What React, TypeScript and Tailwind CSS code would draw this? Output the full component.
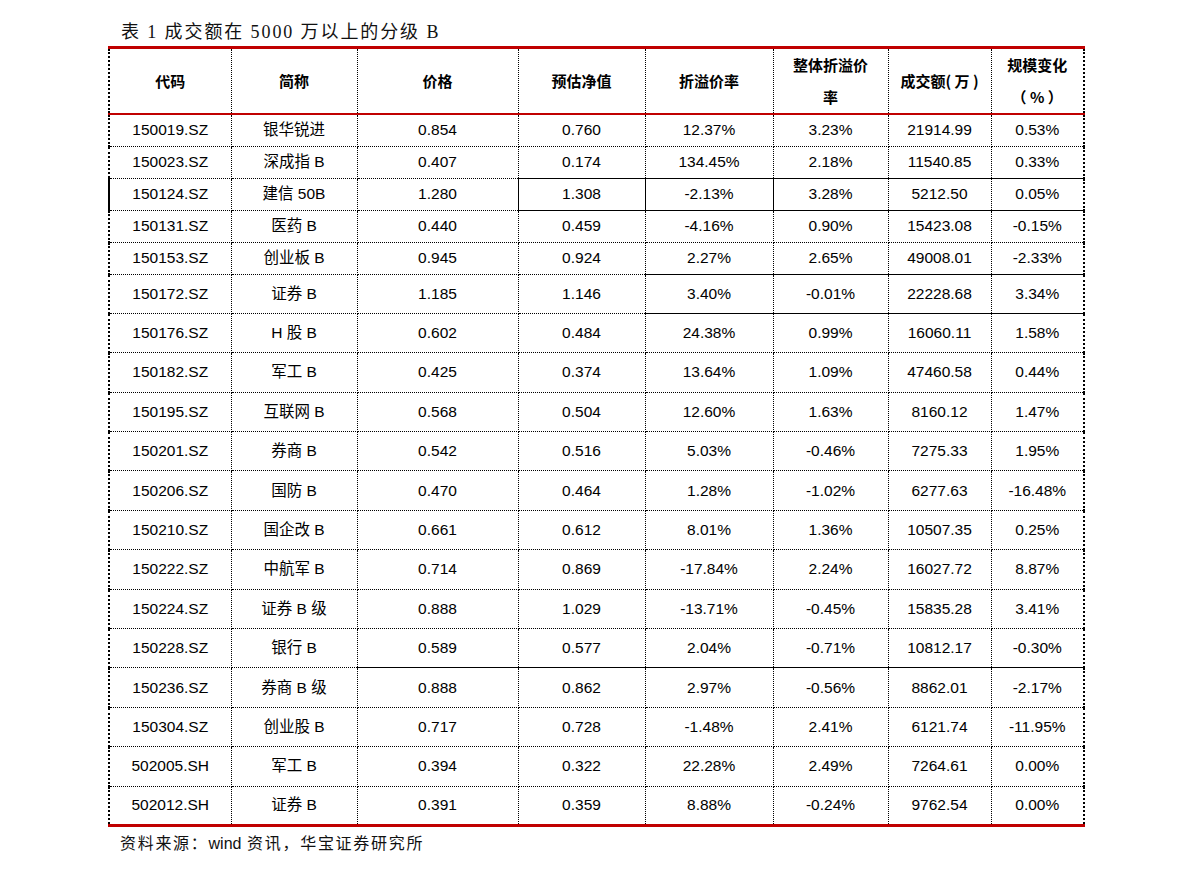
import React from "react";

type Row = [string, string, string, string, string, string, string, string];

const rows: Row[] = [
  ["150019.SZ", "银华锐进", "0.854", "0.760", "12.37%", "3.23%", "21914.99", "0.53%"],
  ["150023.SZ", "深成指 B", "0.407", "0.174", "134.45%", "2.18%", "11540.85", "0.33%"],
  ["150124.SZ", "建信 50B", "1.280", "1.308", "-2.13%", "3.28%", "5212.50", "0.05%"],
  ["150131.SZ", "医药 B", "0.440", "0.459", "-4.16%", "0.90%", "15423.08", "-0.15%"],
  ["150153.SZ", "创业板 B", "0.945", "0.924", "2.27%", "2.65%", "49008.01", "-2.33%"],
  ["150172.SZ", "证券 B", "1.185", "1.146", "3.40%", "-0.01%", "22228.68", "3.34%"],
  ["150176.SZ", "H 股 B", "0.602", "0.484", "24.38%", "0.99%", "16060.11", "1.58%"],
  ["150182.SZ", "军工 B", "0.425", "0.374", "13.64%", "1.09%", "47460.58", "0.44%"],
  ["150195.SZ", "互联网 B", "0.568", "0.504", "12.60%", "1.63%", "8160.12", "1.47%"],
  ["150201.SZ", "券商 B", "0.542", "0.516", "5.03%", "-0.46%", "7275.33", "1.95%"],
  ["150206.SZ", "国防 B", "0.470", "0.464", "1.28%", "-1.02%", "6277.63", "-16.48%"],
  ["150210.SZ", "国企改 B", "0.661", "0.612", "8.01%", "1.36%", "10507.35", "0.25%"],
  ["150222.SZ", "中航军 B", "0.714", "0.869", "-17.84%", "2.24%", "16027.72", "8.87%"],
  ["150224.SZ", "证券 B 级", "0.888", "1.029", "-13.71%", "-0.45%", "15835.28", "3.41%"],
  ["150228.SZ", "银行 B", "0.589", "0.577", "2.04%", "-0.71%", "10812.17", "-0.30%"],
  ["150236.SZ", "券商 B 级", "0.888", "0.862", "2.97%", "-0.56%", "8862.01", "-2.17%"],
  ["150304.SZ", "创业股 B", "0.717", "0.728", "-1.48%", "2.41%", "6121.74", "-11.95%"],
  ["502005.SH", "军工 B", "0.394", "0.322", "22.28%", "2.49%", "7264.61", "0.00%"],
  ["502012.SH", "证券 B", "0.391", "0.359", "8.88%", "-0.24%", "9762.54", "0.00%"],
];

const colW = ["w-[122px]", "w-[126px]", "w-[161px]", "w-[127px]", "w-[128px]", "w-[115px]", "w-[103px]", "w-[93px]"];

const headers = ["代码", "简称", "价格", "预估净值", "折溢价率", "整体折溢价率", "成交额( 万 )", "规模变化（%）"];

function cellExtra(r: number, c: number): string {
  const parts: string[] = [];
  if (c === 0) parts.push("border-l-2");
  if (c === 7) parts.push("border-r-2");
  if (r === 2 && c === 0) parts.push("[border-left-style:solid]");
  if (r === 2 && c >= 3) parts.push("[border-top-style:solid] [border-bottom-style:solid]");
  if (r === 2 && (c === 3 || c === 4)) parts.push("[border-left-style:solid]");
  if (r === 2 && c === 4) parts.push("[border-right-style:solid]");
  if (r === 5 && c >= 4) parts.push("[border-top-style:solid] [border-bottom-style:solid]");
  if (r === 15 && c >= 2) parts.push("[border-top-style:solid]");
  if (r === rows.length - 1)
    parts.push("[border-bottom-style:solid] border-b-[3px] border-b-[#c00000]");
  return parts.join(" ");
}

function HeaderCell({ h, i }: { h: string; i: number }) {
  return (
    <th
      className={`${colW[i]} h-[64px] p-0 text-center align-middle text-[15px] font-bold font-['Noto_Sans_CJK_SC','Liberation_Sans',sans-serif] border-x border-black border-dotted [border-top-style:solid] [border-bottom-style:solid] border-t-[3px] border-t-[#c00000] border-b-2 border-b-[#c00000] ${
        i === 0 ? "border-l-2" : ""
      } ${i === 7 ? "border-r-2" : ""}`}
    >
      {i === 5 ? (
        <div className="leading-[32px] px-[10px]">
          整体折溢价
          <br />率
        </div>
      ) : i === 7 ? (
        <div className="leading-[32px]">
          规模变化
          <br />（ % ）
        </div>
      ) : (
        h
      )}
    </th>
  );
}

export default function App() {
  return (
    <div className="w-[1191px] h-[872px] bg-white text-black font-['Liberation_Sans','Noto_Sans_CJK_SC',sans-serif]">
      <div className="pl-[108px] pt-[18px]">
        <div className="h-[28px] pl-[13px] text-[18px] leading-[28px] tracking-[1.9px] text-[#111] font-['Liberation_Serif','Noto_Sans_CJK_SC',serif]">
          表 1 成交额在 5000 万以上的分级 B
        </div>
        <table className="border-collapse table-fixed w-[975px]">
          <thead>
            <tr>
              {headers.map((h, i) => (
                <HeaderCell key={h} h={h} i={i} />
              ))}
            </tr>
          </thead>
          <tbody>
            {rows.map((row, r) => (
              <tr key={row[0]}>
                {row.map((v, c) => (
                  <td
                    key={c}
                    className={`${r < 5 ? "h-[32px]" : "h-[39.4px]"} p-0 text-center align-middle text-[15.5px] leading-[18px] border border-black border-dotted ${cellExtra(
                      r,
                      c
                    )}`}
                  >
                    {v}
                  </td>
                ))}
              </tr>
            ))}
          </tbody>
        </table>
        <div className="pt-[6px] pl-[12px] text-[16px] leading-[22px] tracking-[1.7px] text-[#111] font-['Liberation_Serif','Noto_Sans_CJK_SC',serif]">
          资料来源：<span className="tracking-normal font-['Liberation_Sans',sans-serif]">wind</span> 资讯，华宝证券研究所
        </div>
      </div>
    </div>
  );
}
